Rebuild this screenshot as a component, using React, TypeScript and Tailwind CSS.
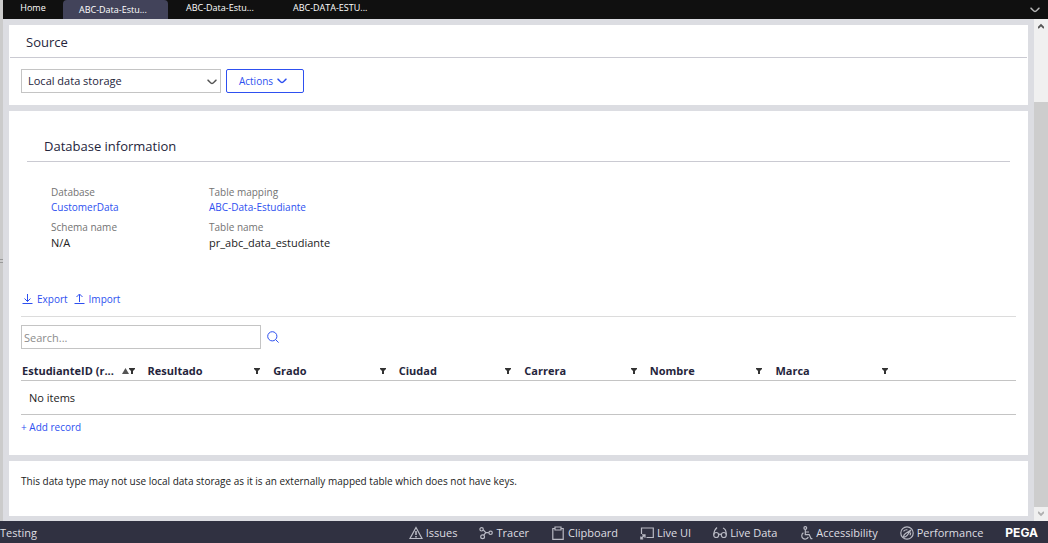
import type { ReactNode } from "react";

const tabs = ["ABC-Data-Estu...", "ABC-Data-Estu...", "ABC-DATA-ESTU..."];
const columns = ["EstudianteID (r...", "Resultado", "Grado", "Ciudad", "Carrera", "Nombre", "Marca"];

const details = [
  { label: "Database", value: "CustomerData", link: true },
  { label: "Table mapping", value: "ABC-Data-Estudiante", link: true },
  { label: "Schema name", value: "N/A", link: false },
  { label: "Table name", value: "pr_abc_data_estudiante", link: false },
];

function Icon({ children, className = "h-3.5 w-3.5" }: { children: ReactNode; className?: string }) {
  return (
    <svg
      viewBox="0 0 14 14"
      className={`shrink-0 ${className}`}
      fill="none"
      stroke="currentColor"
      strokeWidth="1.2"
      aria-hidden="true"
    >
      {children}
    </svg>
  );
}

function Chevron({ className }: { className: string }) {
  return (
    <svg viewBox="0 0 10 6" className={className} fill="none" stroke="currentColor" strokeWidth="1.4" aria-hidden="true">
      <path d="M0.5 1 C2 1.5 3.5 4.5 5 4.5 C6.5 4.5 8 1.5 9.5 1" />
    </svg>
  );
}

function TransferLink({ label, up = false }: { label: string; up?: boolean }) {
  return (
    <a href="#" className="flex items-center gap-1">
      <svg viewBox="0 0 11 12" className="h-3 w-[11px]" fill="none" stroke="currentColor" aria-hidden="true">
        <path d={up ? "M5.5 9V1.5M2.5 4L5.5 1L8.5 4M0.5 10.5H10.5" : "M5.5 1V8.5M2.5 5.5L5.5 8.5L8.5 5.5M0.5 10.5H10.5"} />
      </svg>
      {label}
    </a>
  );
}

const tools: { label: string; icon: ReactNode }[] = [
  {
    label: "Issues",
    icon: (
      <Icon>
        <path d="M7 1.5L13 12.5H1Z" />
        <path d="M7 5V9M7 10V11.5" strokeWidth="1.6" />
      </Icon>
    ),
  },
  {
    label: "Tracer",
    icon: (
      <Icon>
        <circle cx="2.6" cy="3.3" r="1.7" />
        <circle cx="3.6" cy="10.8" r="1.9" />
        <circle cx="11.6" cy="6.8" r="1.7" />
        <path d="M4.3 3.8L6.8 6.6H9.8M6.8 6.6L4.8 9.2" />
      </Icon>
    ),
  },
  {
    label: "Clipboard",
    icon: (
      <Icon>
        <path d="M4 2.5H1.8V13.3H12.2V2.5H10" />
        <path d="M4 1H10V4H4Z" />
      </Icon>
    ),
  },
  {
    label: "Live UI",
    icon: (
      <Icon>
        <path d="M1.5 8V2H13.3V11.5H6.5" />
        <path d="M0.8 12.8L5 8.8M2 8.8H5V11.8M0.8 10.4V12.8H3.2" />
      </Icon>
    ),
  },
  {
    label: "Live Data",
    icon: (
      <Icon>
        <circle cx="3.2" cy="9" r="2.5" />
        <circle cx="10.8" cy="9" r="2.5" />
        <path d="M5.7 8.6Q7 7.6 8.3 8.6M0.8 8.6Q1 4 4 1.5M13.2 8.6Q13.5 3.5 10 2" />
      </Icon>
    ),
  },
  {
    label: "Accessibility",
    icon: (
      <Icon>
        <circle cx="6.3" cy="2" r="1.4" />
        <path d="M6.3 3.5V8.6H10.2L12 12.6H13.4M6.5 6H10" />
        <path d="M4.4 6.8A3.4 3.4 0 1 0 9.3 11" />
      </Icon>
    ),
  },
  {
    label: "Performance",
    icon: (
      <Icon>
        <circle cx="7" cy="7" r="6.2" />
        <path d="M3.5 5.3Q5 3.4 7.4 3.8M10.6 6.5Q10.7 8 10 9.2" />
        <path d="M3.5 11Q5.5 11.6 7.3 9.2L11 4L5.5 7.5Q3.5 9 3.5 11Z" />
      </Icon>
    ),
  },
];

export default function App() {
  return (
    <div className="flex h-screen flex-col overflow-hidden bg-[#dcdde2] font-['Open_Sans',sans-serif] text-[11px] leading-4 text-[#222]">
      <div className="flex min-h-0 flex-1">
        <div className="flex w-[3px] shrink-0 flex-col items-end justify-center bg-[#cbcbcb]">
          <div className="h-1 w-[3px] border-y border-[#999]" />
        </div>
        <div className="flex min-w-0 flex-1 flex-col">
          <nav className="flex h-[19px] shrink-0 bg-[#101010] text-[9px] text-white">
            <a href="#" className="w-15 text-center font-medium">
              Home
            </a>
            <div className="flex gap-0.5">
              {tabs.map((tab, i) => (
                <a
                  key={i}
                  href="#"
                  className={`w-[105px] px-4 font-medium whitespace-nowrap ${i === 0 ? "rounded-t-sm bg-[#42435a] pt-0.5" : ""}`}
                >
                  {tab}
                </a>
              ))}
            </div>
            <button aria-label="More tabs" className="ml-auto px-2 text-[#b5b5b5]">
              <Chevron className="h-1.5 w-2.5" />
            </button>
          </nav>

          <div className="flex min-h-0 flex-1">
            <main className="flex min-w-0 flex-1 flex-col gap-1.5 overflow-hidden p-1.5">
              <section className="bg-white pb-3">
                <h2 className="mr-px ml-px border-b border-[#cacad2] pt-2 pb-1.5 pl-4 text-[13px] leading-[18px] font-medium text-[#25253c]">
                  Source
                </h2>
                <div className="flex gap-[5px] px-3 pt-[11px]">
                  <div className="relative w-[200px]">
                    <select
                      aria-label="Source"
                      className="h-6 w-full appearance-none border border-[#c4c4c4] bg-white pl-1.5 text-[11px] text-[#25253c]"
                    >
                      <option>Local data storage</option>
                    </select>
                    <Chevron className="pointer-events-none absolute top-2.5 right-1 h-1.5 w-2.5 text-[#555]" />
                  </div>
                  <button className="flex h-6 w-[78px] items-center justify-center gap-1 rounded-xs border border-[#2e50f0] pr-1 text-[10px] text-[#2e50f0]">
                    Actions
                    <Chevron className="h-1.5 w-2.5" />
                  </button>
                </div>
              </section>

              <section className="bg-white px-3 pt-[25px] pb-5">
                <h2 className="mr-1.5 ml-1.5 border-b border-[#cacad2] pb-[5px] pl-[17px] text-[13px] leading-5 font-medium text-[#25253c]">
                  Database information
                </h2>
                <dl className="grid grid-cols-[158px_1fr] gap-y-1 pt-[22px] pl-[30px]">
                  {details.map((item) => (
                    <div key={item.label}>
                      <dt className="text-[10px] text-[#737373]">{item.label}</dt>
                      <dd className={item.link ? "text-[10px] leading-[15px] text-[#2e50f0]" : "leading-[15px]"}>
                        {item.link ? <a href="#">{item.value}</a> : item.value}
                      </dd>
                    </div>
                  ))}
                </dl>
                <div className="mt-[41px] flex gap-1.5 border-b border-[#dcdcdc] pb-[9px] pl-px text-[10px] text-[#2e50f0]">
                  <TransferLink label="Export" />
                  <TransferLink label="Import" up />
                </div>
                <div className="flex items-center gap-1.5 pt-2">
                  <input
                    type="text"
                    aria-label="Search"
                    placeholder="Search..."
                    className="h-6 w-60 border border-[#c4c4c4] px-0.5 text-[11px] placeholder:text-[#8c8c8c]"
                  />
                  <button aria-label="Run search" className="text-[#2e50f0]">
                    <svg viewBox="0 0 12 12" className="h-3 w-3" fill="none" stroke="currentColor" aria-hidden="true">
                      <circle cx="5.3" cy="5.3" r="4.6" />
                      <path d="M8.6 8.6L11.6 11.6" />
                    </svg>
                  </button>
                </div>
                <table className="mt-3 w-full table-fixed border-collapse">
                  <thead>
                    <tr className="border-b border-[#c4c4c4]">
                      {columns.map((name, i) => (
                        <th key={name} scope="col" className="w-[12.62%] p-0 text-left font-bold text-[#25253c]">
                          <div className="flex h-[19px] items-center justify-between pr-3 pl-px">
                            <span className="whitespace-nowrap">{name}</span>
                            <button aria-label={`Filter ${name}`} className="flex items-center text-[#333]">
                              {i === 0 && (
                                <svg viewBox="0 0 7 6" className="h-1.5 w-[7px]" fill="#555" aria-hidden="true">
                                  <path d="M3.5 0L7 6H0Z" />
                                </svg>
                              )}
                              <svg viewBox="0 0 6 6" className="h-1.5 w-1.5" fill="currentColor" aria-hidden="true">
                                <path d="M0 0H6V1L4 3V6H2V3L0 1Z" />
                              </svg>
                            </button>
                          </div>
                        </th>
                      ))}
                      <th aria-hidden="true" />
                    </tr>
                  </thead>
                  <tbody>
                    <tr className="border-b border-[#c4c4c4]">
                      <td colSpan={8} className="h-[34px] py-0 pl-2">
                        No items
                      </td>
                    </tr>
                  </tbody>
                </table>
                <button className="mt-1 block text-[10px] text-[#2e50f0]">+ Add record</button>
              </section>

              <section className="bg-white px-3 pt-3 pb-[27px] text-[10px]">
                <p>
                  This data type may not use local data storage as it is an externally mapped table which does not have
                  keys.
                </p>
              </section>
            </main>

            <div className="flex w-3.5 shrink-0 flex-col items-center bg-[#f0f0f0]" aria-hidden="true">
              <svg viewBox="0 0 6 6" className="mt-1 h-1.5 w-1.5" fill="none" stroke="#555" strokeWidth="1.8">
                <path d="M0 5L3 2L6 5" />
              </svg>
              <div className="mt-[73px] w-full flex-1 bg-[#cdcdcd]" />
              <svg viewBox="0 0 6 6" className="my-1 h-1.5 w-1.5" fill="none" stroke="#b0b0b0" strokeWidth="1.8">
                <path d="M0 1L3 4L6 1" />
              </svg>
            </div>
          </div>
        </div>
      </div>

      <footer className="flex h-[22px] shrink-0 items-center bg-[#303141] pt-0.5 pr-2.5 text-[#dedee2]">
        <span>Testing</span>
        <div className="ml-auto flex items-center gap-[22px]">
          {tools.map((tool) => (
            <button key={tool.label} className="flex items-center gap-[3px] font-medium whitespace-nowrap">
              <span className="text-[#b9bac4]">{tool.icon}</span>
              {tool.label}
            </button>
          ))}
          <span className="font-['Inter',sans-serif] text-xs font-bold text-white">PEGA</span>
        </div>
      </footer>
    </div>
  );
}
